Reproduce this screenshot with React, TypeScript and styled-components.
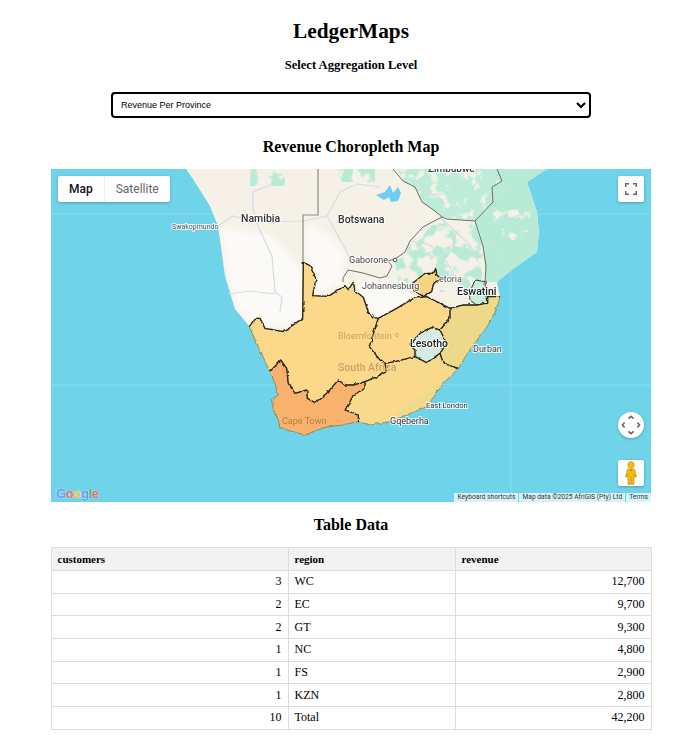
import React from "react";
import styled, { createGlobalStyle } from "styled-components";

const GlobalStyle = createGlobalStyle`
  html, body {
    margin: 0;
    padding: 0;
    background: #fff;
    color: #000;
    font-family: "Liberation Serif", "Times New Roman", serif;
  }
`;

const Page = styled.div`
  box-sizing: border-box;
  width: 695px;
  padding: 19px 0 0 7px;
  display: flex;
  flex-direction: column;
  align-items: center;
`;

const Title = styled.h1`
  margin: 0;
  font-size: 21.3px;
  line-height: 25px;
  font-weight: 700;
`;

const SubTitle = styled.h3`
  margin: 13px 0 0;
  font-size: 12.6px;
  line-height: 16px;
  font-weight: 700;
`;

const LevelSelect = styled.select`
  box-sizing: border-box;
  margin-top: 19px;
  width: 480px;
  height: 26px;
  padding: 0 4px;
  background: #fff;
  color: #000;
  border: 2px solid #000;
  border-radius: 4px;
  font-family: "Liberation Sans", Arial, sans-serif;
  font-size: 9px;
`;

const SectionTitle = styled.h2<{ $top: number }>`
  margin: ${(p) => p.$top}px 0 0;
  font-size: 16px;
  line-height: 19px;
  font-weight: 700;
`;

const MapFrame = styled.div`
  position: relative;
  margin-top: 13px;
  width: 600px;
  height: 333px;
  overflow: hidden;
  background: #6fd3ea;
`;

const MapArt = styled.svg`
  display: block;
  width: 600px;
  height: 333px;
  filter: blur(0.35px);
`;

const MapLabel = styled.text<{ $size: number; $bold?: boolean; $color?: string; $halo?: boolean }>`
  font-family: Roboto, "Liberation Sans", sans-serif;
  font-size: ${(p) => p.$size}px;
  font-weight: ${(p) => (p.$bold ? 500 : 400)};
  fill: ${(p) => p.$color ?? "#3c4043"};
  stroke: ${(p) => (p.$halo === false ? "none" : "rgba(255,255,255,.8)")};
  stroke-width: 2px;
  paint-order: stroke;
`;

const MapTypeBar = styled.div`
  position: absolute;
  top: 7px;
  left: 7px;
  display: flex;
  height: 26px;
  background: #fff;
  border-radius: 2px;
  box-shadow: 0 1px 3px rgba(0, 0, 0, 0.25);
  font-family: Roboto, "Liberation Sans", sans-serif;
  font-size: 12px;
`;

const MapTypeButton = styled.div<{ $active?: boolean }>`
  display: flex;
  align-items: center;
  padding: 0 11px;
  color: ${(p) => (p.$active ? "#111" : "#666")};
  font-weight: ${(p) => (p.$active ? 500 : 400)};
  border-right: ${(p) => (p.$active ? "1px solid #ececec" : "none")};
`;

const ControlButton = styled.div<{ $top: number; $round?: boolean }>`
  position: absolute;
  top: ${(p) => p.$top}px;
  right: 7px;
  width: 26px;
  height: 26px;
  display: flex;
  align-items: center;
  justify-content: center;
  background: #fff;
  border-radius: ${(p) => (p.$round ? "50%" : "2px")};
  box-shadow: 0 1px 3px rgba(0, 0, 0, 0.25);
`;

const GoogleMark = styled.div`
  position: absolute;
  left: 5px;
  bottom: 1px;
  font-family: "Liberation Sans", Arial, sans-serif;
  font-size: 13px;
  font-weight: 700;
  letter-spacing: -0.35px;
  text-shadow: 0 0 1.5px rgba(255, 255, 255, 0.9);
`;

const GoogleLetter = styled.span<{ $color: string }>`
  color: ${(p) => p.$color};
`;

const Attribution = styled.div`
  position: absolute;
  right: 0;
  bottom: 0;
  height: 9px;
  display: flex;
  gap: 1px;
  font-family: Roboto, "Liberation Sans", sans-serif;
  font-size: 6.7px;
  line-height: 9px;
  color: #333;
`;

const AttributionItem = styled.span`
  padding: 0 3px;
  background: rgba(255, 255, 255, 0.72);
  white-space: nowrap;
`;

const DataTable = styled.table`
  margin-top: 13px;
  width: 600px;
  border-collapse: collapse;
  table-layout: fixed;
  font-size: 12px;
`;

const HeadCell = styled.th`
  height: 23px;
  padding: 0 6px;
  box-sizing: border-box;
  text-align: left;
  background: #f2f2f2;
  border: 1px solid #ddd;
  font-size: 11px;
  font-weight: 700;
`;

const Cell = styled.td<{ $right?: boolean }>`
  height: 22.7px;
  padding: 0 6px;
  box-sizing: border-box;
  text-align: ${(p) => (p.$right ? "right" : "left")};
  border: 1px solid #ddd;
`;

const rows = [
  { customers: "3", region: "WC", revenue: "12,700" },
  { customers: "2", region: "EC", revenue: "9,700" },
  { customers: "2", region: "GT", revenue: "9,300" },
  { customers: "1", region: "NC", revenue: "4,800" },
  { customers: "1", region: "FS", revenue: "2,900" },
  { customers: "1", region: "KZN", revenue: "2,800" },
  { customers: "10", region: "Total", revenue: "42,200" },
];

// outlines are traced at 3x from (230, 250)
const provinces = [
  {
    id: "NC",
    fill: "#fbd88a",
    points:
      "220,37 240,47 258,87 248,137 295,139 345,107 355,119 370,97 375,122 400,142 415,187 430,202 445,205 440,220 418,290 450,330 465,340 470,365 430,385 405,395 370,405 345,405 325,390 290,430 255,458 232,445 230,420 195,430 175,400 170,355 152,330 120,365 85,290 58,230 75,205 90,205 105,235 160,245 218,205",
  },
  {
    id: "FS",
    fill: "#fbd88a",
    points:
      "445,205 500,175 550,145 590,140 660,175 660,205 630,240 605,233 570,250 540,285 555,300 555,320 495,335 465,340 450,330 418,290 440,220",
  },
  {
    id: "EC",
    fill: "#f9da8c",
    points:
      "405,395 430,385 470,365 465,340 495,335 555,320 565,325 590,338 630,310 640,340 685,355 640,400 590,470 530,495 480,515 420,525 385,515 385,495 345,480 360,455 370,435 405,415",
  },
  {
    id: "KZN",
    fill: "#eed98b",
    points:
      "660,175 700,165 740,165 770,160 770,140 810,140 795,190 765,240 725,290 685,355 640,340 630,310 650,280 630,240 660,205",
  },
  {
    id: "GT",
    fill: "#f6d480",
    points: "548,100 585,70 610,70 618,55 620,75 632,85 612,100 605,125 580,140 550,120",
  },
  {
    id: "WC",
    fill: "#f8b26e",
    points:
      "120,365 152,330 170,355 175,400 195,430 230,420 232,445 255,458 290,430 325,390 345,405 370,405 405,395 405,415 370,435 360,455 345,480 385,495 385,515 335,525 285,532 225,555 190,545 150,535 145,510 130,480 125,450 145,435 135,400",
  },
];

const inlandBorders = [
  "M58 230L75 205 90 205 105 235 160 245 218 205 220 37 240 47 258 87 248 137 295 139 345 107 355 119 370 97 375 122 400 142 415 187 430 202 445 205 440 220 418 290 450 330 465 340 470 365 430 385 405 395",
  "M445 205L500 175 550 145 590 140 660 175 660 205 630 240 650 280 630 310 640 340 685 355",
  "M660 175L700 165 740 165 770 160 770 140 810 140",
  "M630 240L605 233 570 250 540 285 555 300 555 320 565 325 590 338 630 310",
  "M555 320L495 335 465 340",
  "M120 365L152 330 170 355 175 400 195 430 230 420 232 445 255 458 290 430 325 390 345 405 370 405 405 395 405 415 370 435 360 455 345 480 385 495 385 515",
  "M548 100L585 70 610 70 618 55 620 75 632 85 612 100 605 125 580 140 550 120Z",
];

const LAND =
  "186,169 193,179 210,206 218,226 220,239 225,276 235,309 250,327 260,340 400,345 458,360 473,348 497,300 500,297 497,282 513,269 537,252 539,232 537,212 527,182 547,169";

const SouthernAfricaMap = () => (
  <MapArt viewBox="51 169 600 333">
    <defs>
      <clipPath id="landClip">
        <polygon points={LAND} />
      </clipPath>
      <filter id="soft" x="-10%" y="-10%" width="120%" height="120%">
        <feGaussianBlur stdDeviation="3" />
      </filter>
      {/* patchy vegetation: noise is cut at a threshold and kept inside the shape */}
      <filter id="patchGreen" x="0" y="0" width="100%" height="100%" colorInterpolationFilters="sRGB">
        <feTurbulence type="fractalNoise" baseFrequency="0.085" numOctaves="3" seed="11" />
        <feColorMatrix values="0 0 0 0 .72  0 0 0 0 .92  0 0 0 0 .835  7 0 0 0 -3.3" />
        <feComposite in2="SourceAlpha" operator="in" />
        <feGaussianBlur stdDeviation=".5" />
      </filter>
      <filter id="patchCream" x="0" y="0" width="100%" height="100%" colorInterpolationFilters="sRGB">
        <feTurbulence type="fractalNoise" baseFrequency="0.1" numOctaves="3" seed="23" />
        <feColorMatrix values="0 0 0 0 .95  0 0 0 0 .95  0 0 0 0 .9  7 0 0 0 -3.9" />
        <feComposite in2="SourceAlpha" operator="in" />
        <feGaussianBlur stdDeviation=".5" />
      </filter>
      <filter id="rough" filterUnits="userSpaceOnUse" x="0" y="0" width="900" height="600">
        <feTurbulence type="fractalNoise" baseFrequency="0.06" numOctaves="2" seed="4" />
        <feDisplacementMap in="SourceGraphic" scale="9" xChannelSelector="R" yChannelSelector="G" />
      </filter>
    </defs>
    <rect x="51" y="169" width="600" height="333" fill="#6fd3ea" />
    <path d="M51 214H651M51 385H651M511 169V502" stroke="#8fdcee" strokeWidth="1" fill="none" />
    {/* land */}
    <polygon points={LAND} fill="#f5f1e7" />
    <g clipPath="url(#landClip)">
      <g fill="#fcfaf6" filter="url(#soft)">
        <polygon points="190,178 212,210 222,240 227,276 237,309 252,328 303,328 303,272 272,235 240,230 218,226" />
        <polygon points="306,224 327,232 345,252 343,282 313,296 306,262" />
        <polygon points="345,284 380,280 400,285 420,300 380,318 345,305" />
      </g>
      {/* green */}
      <polygon
        points="475,221 493,202 492,187 502,181 497,169 547,169 527,182 537,212 539,232 537,252 513,269 497,282 486,282 483,246"
        fill="#b7ebd5"
      />
      <polygon
        points="397,169 497,169 502,181 492,187 493,202 475,221 442,217 422,202 415,187 403,181"
        fill="#bdecd8"
      />
      <polygon points="397,169 497,169 502,181 492,187 493,202 475,221 442,217 422,202 415,187 403,181" filter="url(#patchCream)" />
      <polygon points="490,205 530,205 530,240 495,240" filter="url(#patchCream)" />
      <polygon points="395,262 423,230 442,220 475,224 484,250 485,292 400,292" filter="url(#patchGreen)" />
      <polygon points="250,169 285,169 285,186 250,186" filter="url(#patchGreen)" />
      <polygon points="335,169 375,169 375,182 335,182" filter="url(#patchGreen)" />
    </g>
    {/* lakes and roads */}
    <path d="M376 195l9-3 5-7 3 8 5-6 3 6-3 8-7 1-2-5-5 3z" fill="#6fcdf0" />
    <path
      d="M273 184L253 192 253 209 258 226 272 256 275 292 282 297 280 312M218 226L233 216 258 222 303 221 327 216 340 192 357 184 380 187M327 216L347 252 350 259M228 294L250 291 275 294M410 241L430 245 447 262 460 285M440 217L470 245 478 262M490 225L520 215M486 238L505 262M430 195L470 190M415 180L445 205M490 200L510 185"
      fill="none"
      stroke="#d3dbe9"
      strokeWidth="1.2"
    />
    {/* borders */}
    <path d="M318 169V215H303V262" fill="none" stroke="#8f8d83" strokeWidth="1.2" />
    <path
      d="M343 282L343 278 348 270 363 273 380 278 387 276 392 266 388 261 395 259 405 252 410 241 423 227 442 217 447 219 475 221M442 217L435 211 422 202 415 187 403 181 393 169M475 221L493 202 492 187 502 181 497 169M475 221L483 246 486 266 485 282"
      fill="none"
      stroke="#6f706a"
      strokeWidth="1"
    />
    {/* region layer */}
    <g transform="translate(230 250) scale(.33333)" filter="url(#rough)">
      <polygon
        points="718,130 735,90 765,95 770,160 740,165 720,150"
        fill="#c6eedd"
        stroke="#3a3a34"
        strokeWidth="3"
      />
      <polygon points="540,285 570,250 605,233 635,245 650,280 630,310 590,338 565,325 555,300" fill="#d6ece3" />
      {provinces.map((p) => (
        <polygon key={p.id} points={p.points} fill={p.fill} stroke="#7d6a3f" strokeWidth="2" strokeLinejoin="round" />
      ))}
      <polygon points="480,512 590,466 638,398 590,430 500,488" fill="#efda8c" />
      {inlandBorders.map((d) => (
        <path key={d} d={d} fill="none" stroke="#2b2719" strokeWidth="4" strokeLinejoin="round" />
      ))}
    </g>
    {/* labels */}
    <MapLabel x="428" y="172" $size={10} $bold>Zimbabwe</MapLabel>
    <MapLabel x="241" y="222" $size={10.5} $bold $color="#333">Namibia</MapLabel>
    <MapLabel x="338" y="223" $size={10.5} $bold $color="#333">Botswana</MapLabel>
    <MapLabel x="172" y="229" $size={7} $color="#555">Swakopmundo</MapLabel>
    <MapLabel x="349" y="263" $size={9} $color="#444">Gaborone</MapLabel>
    <circle cx="395" cy="260" r="1.8" fill="#fff" stroke="#444" strokeWidth=".9" />
    <MapLabel x="362" y="289" $size={9} $color="#444">Johannesburg</MapLabel>
    <MapLabel x="439" y="282" $size={9} $color="#555">etoria</MapLabel>
    <MapLabel x="457" y="295" $size={10.5} $bold $color="#222">Eswatini</MapLabel>
    <MapLabel x="338" y="339" $size={9} $halo={false} $color="#c9a468">Bloemfontein</MapLabel>
    <circle cx="397" cy="335" r="1.6" fill="none" stroke="#c9a468" strokeWidth=".8" />
    <MapLabel x="338" y="371" $size={10.5} $bold $halo={false} $color="#c9a468">South Africa</MapLabel>
    <MapLabel x="410" y="347" $size={10.5} $bold $color="#222">Lesotho</MapLabel>
    <MapLabel x="473" y="352" $size={9} $color="#444">Durban</MapLabel>
    <MapLabel x="426" y="408" $size={7.5} $color="#333">East London</MapLabel>
    <MapLabel x="390" y="424" $size={9} $color="#333">Gqeberha</MapLabel>
    <MapLabel x="282" y="424" $size={9} $halo={false} $color="#b77c42">Cape Town</MapLabel>
  </MapArt>
);

const FullscreenIcon = () => (
  <svg width="12" height="12" viewBox="0 0 12 12" fill="none" stroke="#666" strokeWidth="1.5">
    <path d="M.7 4V.7H4M8 .7h3.3V4M11.3 8v3.3H8M4 11.3H.7V8" />
  </svg>
);

const PanIcon = () => (
  <svg width="20" height="20" viewBox="0 0 20 20" fill="none" stroke="#666" strokeWidth="1.6">
    <path d="M7.5 3.6L10 1.4l2.5 2.2M7.5 16.4l2.5 2.2 2.5-2.2M3.6 7.5L1.4 10l2.2 2.5M16.4 7.5l2.2 2.5-2.2 2.5" />
  </svg>
);

const PegmanIcon = () => (
  <svg width="16" height="24" viewBox="0 0 16 24">
    <circle cx="8" cy="4" r="3.2" fill="#fbbc04" stroke="#b98a10" strokeWidth=".6" />
    <path
      d="M4.5 8h7l2 8h-1.700l-.8-3v10.500H8.500V16h-1v7.500H5V13l-.8 3H2.500z"
      fill="#fbbc04"
      stroke="#b98a10"
      strokeWidth=".6"
    />
    <path d="M6.500 8L8 11l1.500-3z" fill="#e8743b" />
  </svg>
);

const App = () => {
  return (
    <Page>
      <GlobalStyle />
      <Title>LedgerMaps</Title>
      <SubTitle>Select Aggregation Level</SubTitle>
      <LevelSelect defaultValue="province">
        <option value="province">Revenue Per Province</option>
        <option value="city">Revenue Per City</option>
      </LevelSelect>
      <SectionTitle $top={19}>Revenue Choropleth Map</SectionTitle>
      <MapFrame>
        <SouthernAfricaMap />
        <MapTypeBar>
          <MapTypeButton $active>Map</MapTypeButton>
          <MapTypeButton>Satellite</MapTypeButton>
        </MapTypeBar>
        <ControlButton $top={7}>
          <FullscreenIcon />
        </ControlButton>
        <ControlButton $top={243} $round>
          <PanIcon />
        </ControlButton>
        <ControlButton $top={291}>
          <PegmanIcon />
        </ControlButton>
        <GoogleMark>
          <GoogleLetter $color="#6a9cf2">G</GoogleLetter>
          <GoogleLetter $color="#ea6a5c">o</GoogleLetter>
          <GoogleLetter $color="#f5c33b">o</GoogleLetter>
          <GoogleLetter $color="#6a9cf2">g</GoogleLetter>
          <GoogleLetter $color="#4fb56a">l</GoogleLetter>
          <GoogleLetter $color="#ea6a5c">e</GoogleLetter>
        </GoogleMark>
        <Attribution>
          <AttributionItem>Keyboard shortcuts</AttributionItem>
          <AttributionItem>Map data ©2025 AfriGIS (Pty) Ltd</AttributionItem>
          <AttributionItem>Terms</AttributionItem>
        </Attribution>
      </MapFrame>
      <SectionTitle $top={13}>Table Data</SectionTitle>
      <DataTable>
        <colgroup>
          <col style={{ width: 237 }} />
          <col style={{ width: 167 }} />
          <col style={{ width: 196 }} />
        </colgroup>
        <thead>
          <tr>
            <HeadCell>customers</HeadCell>
            <HeadCell>region</HeadCell>
            <HeadCell>revenue</HeadCell>
          </tr>
        </thead>
        <tbody>
          {rows.map((r) => (
            <tr key={r.region}>
              <Cell $right>{r.customers}</Cell>
              <Cell>{r.region}</Cell>
              <Cell $right>{r.revenue}</Cell>
            </tr>
          ))}
        </tbody>
      </DataTable>
    </Page>
  );
};

export default App;
